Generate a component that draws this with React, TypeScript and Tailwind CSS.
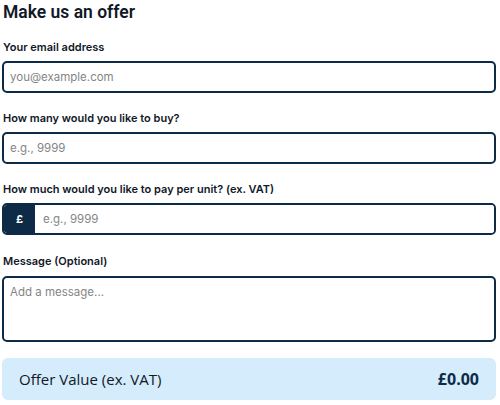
import React from "react";

const Label = ({ children }: { children: React.ReactNode }) => (
  <label className="block pl-[1px] text-[11px] font-semibold leading-[16px] text-[#111827]">
    {children}
  </label>
);

const inputClass =
  "block h-[32px] w-full rounded-[5px] border-2 border-[#0d2b47] bg-white px-[6px] text-[11.5px] text-[#111] outline-none placeholder:text-[#858585]";

export default function App() {
  return (
    <div
      className="w-[500px] bg-white pl-[2px] pr-[4px]"
      style={{ fontFamily: "Inter, 'Liberation Sans', sans-serif" }}
    >
      <h2
        className="pl-[1px] pt-[1px] text-[17.5px] font-semibold leading-[22px] text-[#111827]"
        style={{ fontFamily: "Roboto, 'Liberation Sans', sans-serif" }}
      >
        Make us an offer
      </h2>

      <div className="mt-[16px]">
        <Label>Your email address</Label>
      </div>
      <input className={`mt-[6px] ${inputClass}`} placeholder="you@example.com" />

      <div className="mt-[17px]">
        <Label>How many would you like to buy?</Label>
      </div>
      <input className={`mt-[6px] ${inputClass}`} placeholder="e.g., 9999" />

      <div className="mt-[17px]">
        <Label>How much would you like to pay per unit? (ex. VAT)</Label>
      </div>
      <div className="mt-[6px] flex h-[32px] overflow-hidden rounded-[5px] border-2 border-[#0d2b47]">
        <span className="flex w-[31px] items-center justify-center bg-[#0d2b47] text-[11px] font-bold text-white">
          £
        </span>
        <input
          className="h-full flex-1 bg-white px-[8px] text-[11.5px] outline-none placeholder:text-[#858585]"
          placeholder="e.g., 9999"
        />
      </div>

      <div className="mt-[18px]">
        <Label>Message (Optional)</Label>
      </div>
      <textarea
        className="mt-[7px] block h-[66px] w-full resize-none rounded-[5px] border-2 border-[#0d2b47] bg-white px-[6px] py-[6px] text-[11.5px] leading-[16px] outline-none placeholder:text-[#858585]"
        placeholder="Add a message..."
      />

      <div
        className="mt-[16px] flex h-[42px] items-center justify-between rounded-[6px] bg-[#d4ecfb] px-[17px]"
        style={{ fontFamily: "'Open Sans', 'Liberation Sans', sans-serif" }}
      >
        <span className="text-[15px] text-[#111827]">Offer Value (ex. VAT)</span>
        <span className="text-[16px] font-bold text-[#0d2b47]">£0.00</span>
      </div>
    </div>
  );
}
